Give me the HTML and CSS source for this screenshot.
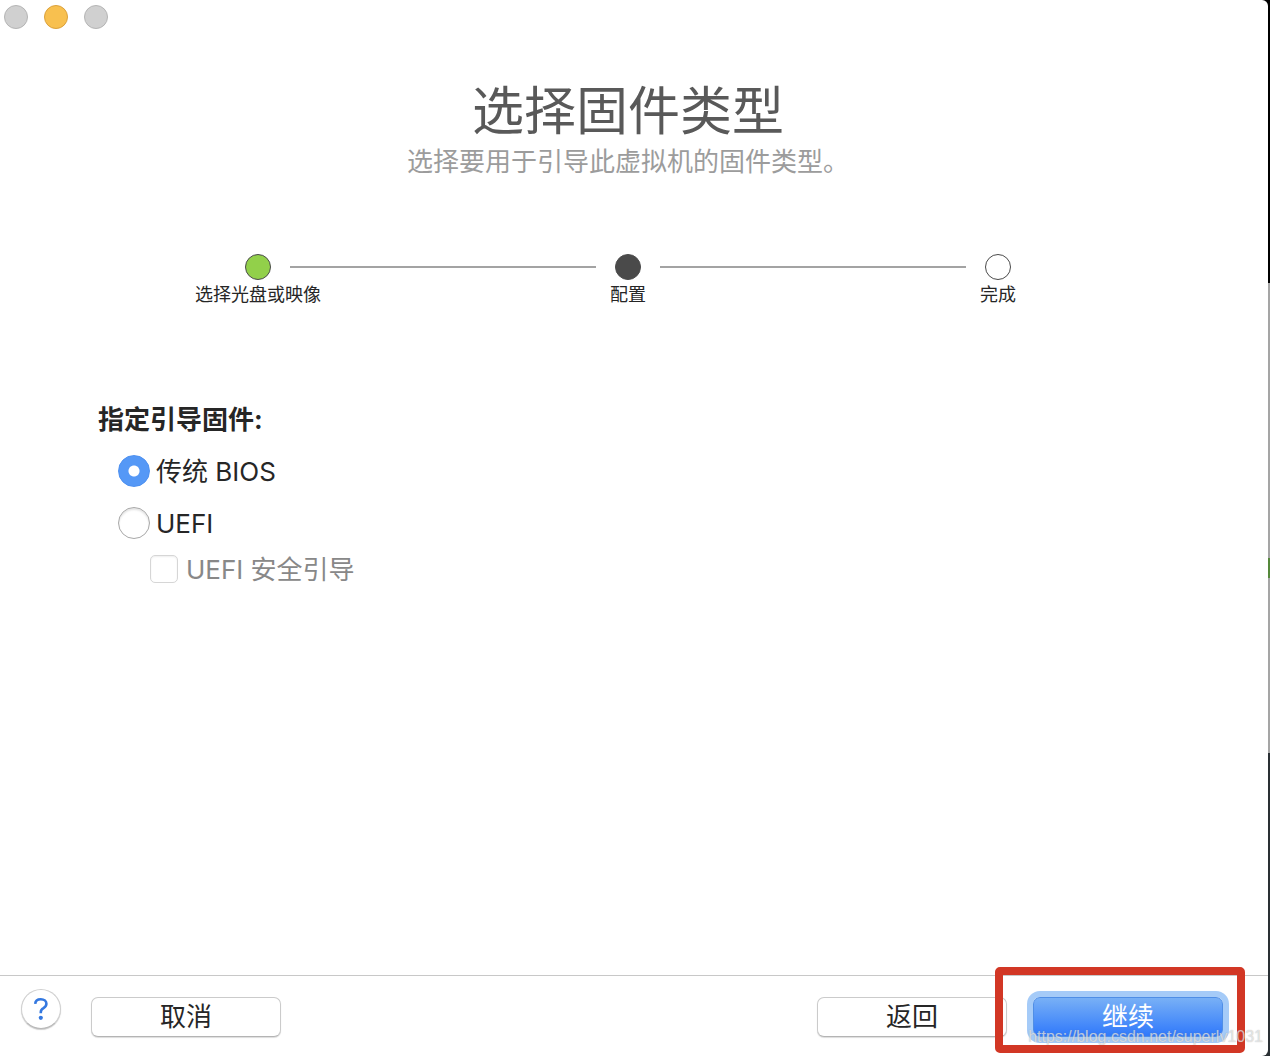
FILE: index.html
```html
<!DOCTYPE html>
<html lang="zh-CN">
<head>
    <meta charset="UTF-8">
    <meta name="viewport" content="width=device-width, initial-scale=1.0">
    <title>选择固件类型</title>
    <link rel="stylesheet" href="styles.css">
</head>
<body>
    <div class="window">
        <div class="titlebar">
            <button type="button" class="light" aria-label="关闭"></button>
            <button type="button" class="light light-minimize" aria-label="最小化"></button>
            <button type="button" class="light" aria-label="缩放"></button>
        </div>

        <header class="heading">
            <h1>选择固件类型</h1>
            <p>选择要用于引导此虚拟机的固件类型。</p>
        </header>

        <ol class="steps">
            <li class="step done">
                <div class="track"><span class="dot"></span></div>
                选择光盘或映像
            </li>
            <li class="step current">
                <div class="track"><span class="dot"></span></div>
                配置
            </li>
            <li class="step">
                <div class="track"><span class="dot"></span></div>
                完成
            </li>
        </ol>

        <form class="content" id="firmwareForm">
            <h2>指定引导固件:</h2>
            <div class="option">
                <input type="radio" name="firmware" id="bios" checked>
                <label for="bios">传统 BIOS</label>
            </div>
            <div class="option">
                <input type="radio" name="firmware" id="uefi">
                <label for="uefi">UEFI</label>
            </div>
            <div class="option sub">
                <input type="checkbox" id="secureBoot" disabled>
                <label for="secureBoot">UEFI 安全引导</label>
            </div>
        </form>

        <footer class="footer">
            <button type="button" class="help" aria-label="帮助">
                <svg width="16" height="24" viewBox="0 0 16 24" fill="none">
                    <path d="M2.200 6.800C2.400 3.800 4.500 2.200 7.800 2.200c3.400 0 5.600 1.800 5.600 4.500 0 2-1 3.200-2.900 4.400C8.500 12.300 7.800 13.200 7.800 15v1.200" stroke="#3478e0" stroke-width="2.600" />
                    <circle cx="7.800" cy="20.800" r="2.100" fill="#3478e0" />
                </svg>
            </button>
            <button type="button" class="btn cancel">取消</button>
            <button type="button" class="btn back">返回</button>
            <div class="next">
                <button type="submit" form="firmwareForm" class="btn primary">继续</button>
                <span class="marker"></span>
            </div>
        </footer>
        <span class="watermark">https://blog.csdn.net/superlv1031</span>
    </div>
</body>
</html>
```

FILE: styles.css
```css
* {
    box-sizing: border-box;
}
body {
    margin: 0;
    padding-right: 2px;
    font-family: Inter, "Noto Sans CJK SC", sans-serif;
    font-size: 26px;
    color: #262626;
    /* desktop showing past the right edge of the window */
    background: linear-gradient(#000 0 283px, #a5a5a5 283px 558px, #55883b 558px 578px, #a5a5a5 578px 753px, #2a3034 753px);
}
h1, h2, p, ol {
    margin: 0;
    padding: 0;
}
button {
    padding: 0;
    font: inherit;
    color: inherit;
}
.window {
    position: relative;
    display: flex;
    flex-direction: column;
    min-height: 100vh;
    background: #fff;
    border-radius: 0 6px 6px 0;
    overflow: hidden;
}

.titlebar {
    display: flex;
    gap: 16px;
    padding: 5px 4px;
}
.light {
    width: 24px;
    height: 24px;
    border: 1px solid #b5b5b5;
    border-radius: 50%;
    background: #d0d0d0;
}
.light-minimize {
    border-color: #dba13c;
    background: #f8c04f;
}

.heading {
    padding: 46px 12px 0 0;
    text-align: center;
}
.heading h1 {
    font-size: 52px;
    font-weight: 400;
    line-height: 64px;
    color: #595959;
}
.heading p {
    line-height: 36px;
    color: #9c9c9c;
}

/* wizard progress */
.steps {
    display: grid;
    grid-template-columns: repeat(3, 1fr);
    padding: 74px 85px 0 73px;
    list-style: none;
}
.step {
    font-size: 18px;
    line-height: 30px;
    text-align: center;
}
.track {
    display: flex;
    align-items: center;
    gap: 19px;
}
.track::before,
.track::after {
    content: "";
    flex: 1;
    height: 2px;
    background: #a3a3a3;
}
.step:first-child .track::before,
.step:last-child .track::after {
    background: none;
}
.dot {
    width: 26px;
    height: 26px;
    border: 1px solid #4a4a4a;
    border-radius: 50%;
}
.done .dot {
    background: #92d04a;
}
.current .dot {
    background: #4a4a4a;
}

.content {
    flex: 1;
    padding: 90px 98px 0;
}
.content h2 {
    margin-bottom: 5px;
    font-size: 26px;
    line-height: 40px;
}
.option {
    display: flex;
    align-items: center;
    gap: 6px;
    height: 52px;
    padding-left: 20px;
    line-height: 36px;
}
.option label {
    padding-top: 2px;
}
.option input {
    appearance: none;
    margin: 0;
    width: 32px;
    height: 32px;
    border: 1px solid #a8a8a8;
    border-radius: 50%;
    background: #fff;
    box-shadow: inset 0 2px 2px #e4e4e4;
}
.option input:checked {
    border-color: #4d90f0;
    background: radial-gradient(circle, #fff 5px, #5598f6 6px);
    box-shadow: none;
}
.option.sub {
    gap: 8px;
    height: 40px;
    padding-left: 52px;
    color: #888;
}
.option.sub input {
    width: 28px;
    height: 28px;
    border-color: #d6d6d6;
    border-radius: 5px;
    box-shadow: inset 0 1px 2px #eee;
}

.footer {
    display: flex;
    align-items: flex-start;
    padding: 13px 45px 19px 21px;
    border-top: 1px solid #c8c8c8;
}
.help {
    display: flex;
    align-items: center;
    justify-content: center;
    width: 40px;
    height: 40px;
    margin-right: 30px;
    border: 1px solid #d0d0d0;
    border-bottom-color: #b8b8b8;
    border-radius: 50%;
    background: #fff;
    box-shadow: 0 1px 1px #ccc;
}
.btn {
    width: 190px;
    height: 40px;
    margin-top: 8px;
    border: 1px solid #cbcbcb;
    border-bottom-color: #b4b4b4;
    border-radius: 7px;
    background: #fff;
    line-height: 38px;
    box-shadow: 0 1px 1px #ddd;
}
.back {
    margin-left: auto;
}
.next {
    position: relative;
    margin-left: 26px;
}
.primary {
    border: 1px solid #4f8ee6;
    color: #fff;
    background: linear-gradient(#78b0f6, #3079fb);
    box-shadow: 0 0 0 6px #a5cbf8;
}
/* red frame around the continue button */
.marker {
    position: absolute;
    inset: -22px -22px -16px -38px;
    border: 8px solid #d23725;
    border-radius: 5px;
    pointer-events: none;
}
.watermark {
    position: absolute;
    right: 5px;
    bottom: 9px;
    font-family: "Liberation Sans", sans-serif;
    font-size: 16px;
    line-height: 20px;
    color: rgba(255, 255, 255, 0.6);
    text-shadow: 0 0 1px rgba(120, 120, 120, 0.6);
    pointer-events: none;
}
```
